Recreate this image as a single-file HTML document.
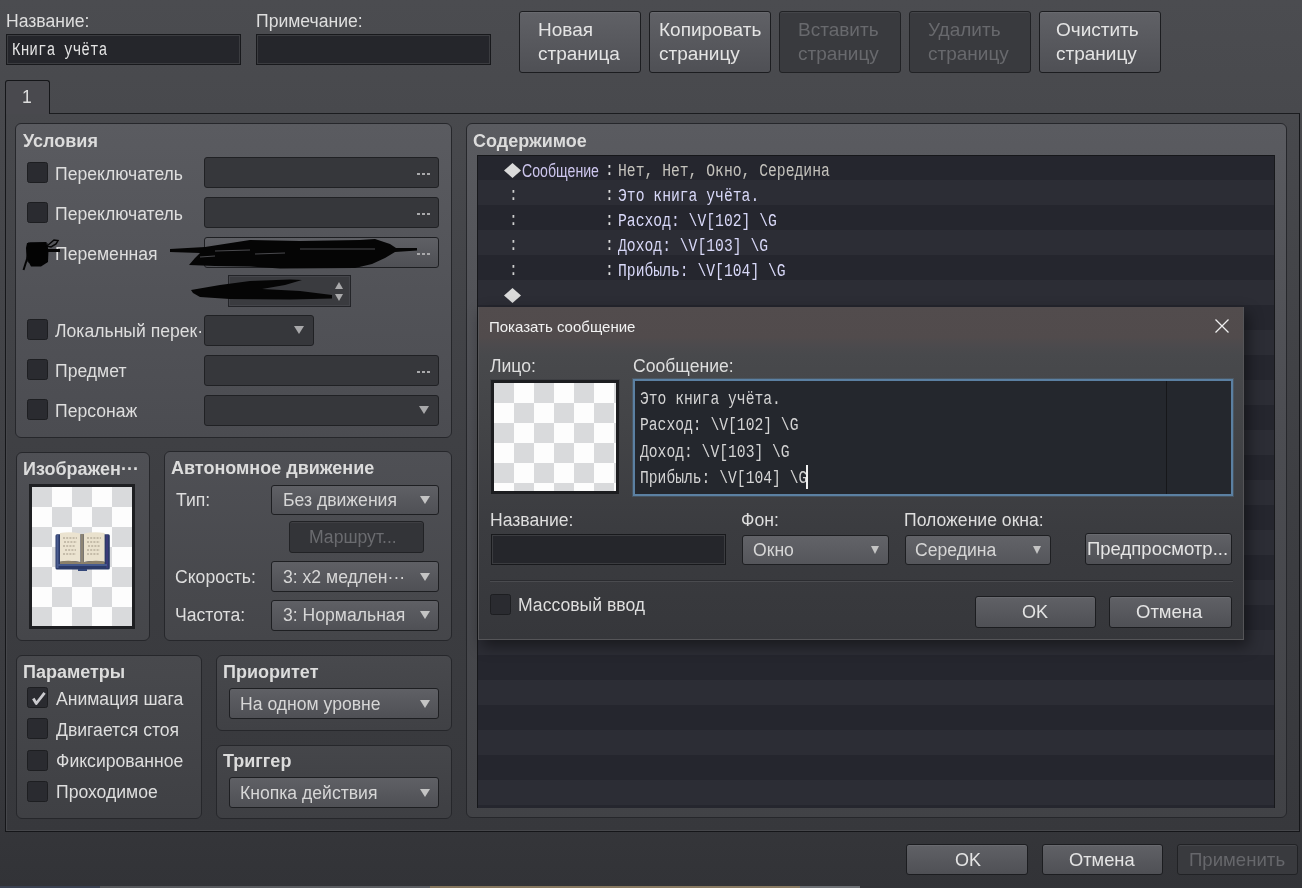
<!DOCTYPE html>
<html><head><meta charset="utf-8">
<style>
*{box-sizing:border-box;margin:0;padding:0}
html,body{width:1302px;height:888px;overflow:hidden}
body{position:relative;-webkit-font-smoothing:antialiased;font-family:"Liberation Sans",sans-serif;font-size:17px;color:#dcdcdc;
background:linear-gradient(to bottom,#4b4c50 0px,#48494d 113px,#3a3b3f 700px,#323337 888px)}
.a{position:absolute}
.t{position:absolute;white-space:nowrap;will-change:transform;line-height:17px;font-size:17.6px;color:#dedede}
.b{font-weight:bold;font-size:18px;line-height:18px;color:#dcdcdc}
.m{font-family:"Liberation Mono",monospace}
.inp{position:absolute;background:#25262b;border:1px solid #18191c;box-shadow:inset 0 0 0 1px #3b3c40}
.btn{position:absolute;border:1px solid #1c1d20;border-radius:3px;background:linear-gradient(#606166,#4f5055);box-shadow:inset 0 1px 0 rgba(255,255,255,0.06)}
.dis{background:#393a3e;border-color:#212225}
.grp{position:absolute;border:1px solid #26272b;border-radius:6px}
.cb{position:absolute;width:21px;height:21px;background:#2a2b30;border:1px solid #1d1e21;border-radius:2.5px}
.fld{position:absolute;background:#36373b;border:1px solid #202124;border-radius:3px}
.cmb{position:absolute;border:1px solid #1e1f22;border-radius:3px;background:linear-gradient(#5f6065,#4f5055)}
.arr{position:absolute;width:0;height:0;border-left:5px solid transparent;border-right:5px solid transparent;border-top:8px solid #c4c4c4}
.dots{position:absolute;width:13px;height:2px;background:linear-gradient(to right,#a9a9ab 0 3px,transparent 3px 5px,#a9a9ab 5px 8px,transparent 8px 10px,#a9a9ab 10px 13px)}
.sx{display:inline-block;transform-origin:0 0}
</style></head><body>

<!-- top labels and inputs -->
<div class="t" style="left:6px;top:13px">Название:</div>
<div class="inp" style="left:6px;top:34px;width:235px;height:31px"></div>
<div class="t m" style="left:12px;top:41px;font-size:19px;line-height:19px;color:#e4e4e4"><span class="sx" style="transform:scaleX(0.76)">Книга учёта</span></div>
<div class="t" style="left:256px;top:13px">Примечание:</div>
<div class="inp" style="left:256px;top:34px;width:235px;height:31px"></div>

<!-- top buttons -->
<div class="btn" style="left:519px;top:11px;width:122px;height:62px"></div>
<div class="btn" style="left:649px;top:11px;width:122px;height:62px"></div>
<div class="btn dis" style="left:779px;top:11px;width:122px;height:62px"></div>
<div class="btn dis" style="left:909px;top:11px;width:122px;height:62px"></div>
<div class="btn" style="left:1039px;top:11px;width:122px;height:62px"></div>

<!-- tab + page panel -->
<div class="a" style="left:5px;top:113px;width:1295px;height:719px;border:1px solid #151619;border-top-color:#1b1c1f;background:linear-gradient(to bottom,#48494d 0,#3d3e42 400px,#37383c 719px);box-shadow:inset 1px -1px 0 #46474b"></div>
<div class="a" style="left:5px;top:80px;width:45px;height:34px;border:1px solid #151619;border-bottom:none;border-radius:3px 3px 0 0;background:#49494e"></div>
<div class="t" style="left:22px;top:88.5px">1</div>


<!-- top button labels -->
<div class="t" style="left:537.5px;top:17.5px;line-height:24.3px;font-size:19px;color:#e4e4e4">Новая<br>страница</div>
<div class="t" style="left:658.5px;top:17.5px;line-height:24.3px;font-size:19px;color:#e4e4e4">Копировать<br>страницу</div>
<div class="t" style="left:797.5px;top:17.5px;line-height:24.3px;font-size:19px;color:#68696d">Вставить<br>страницу</div>
<div class="t" style="left:928px;top:17.5px;line-height:24.3px;font-size:19px;color:#68696d">Удалить<br>страницу</div>
<div class="t" style="left:1056px;top:17.5px;line-height:24.3px;font-size:19px;color:#e4e4e4">Очистить<br>страницу</div>

<!-- group: Условия -->
<div class="grp" style="left:15px;top:123px;width:437px;height:315px;background:linear-gradient(#5a5b60,#4b4c51)"></div>
<div class="t b" style="left:23px;top:132px">Условия</div>
<div class="cb" style="left:27px;top:162px"></div>
<div class="t" style="left:55px;top:166px">Переключатель</div>
<div class="fld" style="left:204px;top:157px;width:235px;height:31px"></div><div class="dots" style="left:417px;top:173px"></div>
<div class="cb" style="left:27px;top:202px"></div>
<div class="t" style="left:55px;top:206px">Переключатель</div>
<div class="fld" style="left:204px;top:197px;width:235px;height:31px"></div><div class="dots" style="left:417px;top:213px"></div>
<div class="cb" style="left:27px;top:242px"></div>
<div class="t" style="left:55px;top:246px">Переменная</div>
<div class="cmb" style="left:204px;top:237px;width:235px;height:31px"></div><div class="dots" style="left:417px;top:253px"></div>
<div class="a" style="left:228px;top:275px;width:123px;height:32px;background:#3a3b3f;border:1px solid #232428;box-shadow:inset 0 0 0 1px #44454a"></div><div class="a" style="left:335px;top:282px;width:0;height:0;border-left:4px solid transparent;border-right:4px solid transparent;border-bottom:7px solid #a9a9ab"></div><div class="a" style="left:335px;top:294px;width:0;height:0;border-left:4px solid transparent;border-right:4px solid transparent;border-top:7px solid #a9a9ab"></div>
<div class="cb" style="left:27px;top:319px"></div>
<div class="t" style="left:55px;top:323px">Локальный перек·</div>
<div class="fld" style="left:204px;top:315px;width:110px;height:31px"></div><div class="arr" style="left:294px;top:326px;border-top-color:#a8a8aa"></div>
<div class="cb" style="left:27px;top:359px"></div>
<div class="t" style="left:55px;top:363px">Предмет</div>
<div class="fld" style="left:204px;top:355px;width:235px;height:31px"></div><div class="dots" style="left:417px;top:371px"></div>
<div class="cb" style="left:27px;top:399px"></div>
<div class="t" style="left:55px;top:403px">Персонаж</div>
<div class="fld" style="left:204px;top:395px;width:235px;height:31px"></div><div class="arr" style="left:419px;top:406px;border-top-color:#a8a8aa"></div>


<!-- scribbles -->
<svg class="a" style="left:0;top:0" width="460" height="320">
<path d="M170 249 L205 247 L250 240 L300 241 L360 240 L375 239 L390 244 L396 248 L417 248 L417 250.5 L395 252 L385 258 L372 264 L355 268 L280 268.5 L250 266.5 L215 266 L189 265 L195 258 L200 253 L170 252 Z" fill="#050505"/>
<path d="M215 251 L250 250 M255 254 L285 253 M300 249 L375 249 M200 257 L215 256" stroke="#5a5b5f" stroke-width="0.8"/>
<path d="M191 290 L220 285 L250 281 L290 279.5 L302 280 L285 285 L262 289 L300 291 L332 295 L332 298.5 L290 299.5 L230 299 L200 297 L193 293 Z" fill="#050505"/>
<path d="M27 243 L46 242 L48.5 250 L48 262 L41 266.5 L31 266.5 L26.5 258 L26 248 Z" fill="#030303"/>
<path d="M28 256 L23.5 270" stroke="#050505" stroke-width="2"/>
<path d="M48 250.5 L60 250.5" stroke="#050505" stroke-width="3"/>
<path d="M47 246 L54 240 L58 240.5 L56 244 L51 247 Z" fill="none" stroke="#050505" stroke-width="1.5"/>
</svg>

<!-- group: Изображение -->
<div class="grp" style="left:16px;top:452px;width:134px;height:189px;background:linear-gradient(#4f5055,#45464a)"></div>
<div class="t b" style="left:23px;top:460px">Изображен···</div>
<div class="a" style="left:29px;top:484px;width:106px;height:145px;background:#1e1f22;padding:3px"><div style="width:100%;height:100%;background:conic-gradient(#fdfdfd 90deg,#d9dadc 90deg 180deg,#fdfdfd 180deg 270deg,#d9dadc 270deg);background-size:40px 40px"></div></div>


<svg class="a" style="left:55px;top:532px" width="56" height="40" viewBox="0 0 56 40">
<rect x="0.5" y="2.3" width="54.3" height="35.2" rx="1.5" fill="#2b3a68"/>
<rect x="1.5" y="3" width="2" height="33" fill="#4a5c90"/>
<rect x="51" y="3" width="2" height="33" fill="#3a3a78"/>
<rect x="3" y="32" width="49" height="2" fill="#465a8e"/>
<rect x="23" y="37" width="9" height="2" fill="#33477a"/>
<path d="M5 1 Q15 -0.5 25.5 1.5 L25.5 30 Q15 28 5 30 Z" fill="#ebe3d0"/>
<path d="M29 1.5 Q39 -0.5 49.6 1 L49.6 30 Q39 28 29 30 Z" fill="#e9e1cd"/>
<rect x="25.5" y="2" width="3.3" height="29" fill="#8c8474"/>
<path d="M5 29.5 Q15 27.5 27 30.5 Q39 27.5 49.6 29.5 L49.6 32 L5 32 Z" fill="#8b806a"/>
<path d="M8 6h14M9 10h13M8 14h12M10 18h11M8 22h13M32 6h14M32 10h13M33 14h12M32 18h13M32 22h12" stroke="#a09684" stroke-width="1.1" stroke-dasharray="2 1.2"/>
</svg>

<!-- group: Автономное движение -->
<div class="grp" style="left:164px;top:451px;width:288px;height:190px;background:linear-gradient(#4f5055,#45464a)"></div>
<div class="t b" style="left:171px;top:459px">Автономное движение</div>
<div class="t" style="left:176px;top:492px">Тип:</div>
<div class="cmb" style="left:271px;top:485px;width:168px;height:30px"></div><div class="t" style="left:283px;top:492px;color:#d6d6d6;font-size:17.6px">Без движения</div><div class="arr" style="left:420px;top:496px"></div>
<div class="btn dis" style="left:289px;top:521px;width:135px;height:32px;background:#333438"></div><div class="t" style="left:309px;top:529px;color:#6a6b6f">Маршрут...</div>
<div class="t" style="left:175px;top:569px">Скорость:</div>
<div class="cmb" style="left:271px;top:561px;width:168px;height:31px"></div><div class="t" style="left:283px;top:569px;color:#d6d6d6;font-size:17.6px">3: x2 медлен···</div><div class="arr" style="left:420px;top:573px"></div>
<div class="t" style="left:175px;top:607px">Частота:</div>
<div class="cmb" style="left:271px;top:600px;width:168px;height:31px"></div><div class="t" style="left:283px;top:607px;color:#d6d6d6;font-size:17.6px">3: Нормальная</div><div class="arr" style="left:420px;top:611px"></div>

<!-- group: Параметры -->
<div class="grp" style="left:16px;top:655px;width:186px;height:164px;background:linear-gradient(#48494d,#3f4044)"></div>
<div class="t b" style="left:23px;top:663px">Параметры</div>
<div class="cb" style="left:27px;top:687px;width:21px;height:21px"></div>
<svg class="a" style="left:27px;top:687px" width="22" height="22"><path d="M6.3 11.5 L9.3 16.5 L17.6 5.8" fill="none" stroke="#cacace" stroke-width="2.8" stroke-linejoin="round"/></svg><div class="t" style="left:56px;top:691px">Анимация шага</div>
<div class="cb" style="left:27px;top:718px;width:21px;height:21px"></div>
<div class="t" style="left:56px;top:722px">Двигается стоя</div>
<div class="cb" style="left:27px;top:750px;width:21px;height:21px"></div>
<div class="t" style="left:56px;top:753px">Фиксированное</div>
<div class="cb" style="left:27px;top:781px;width:21px;height:21px"></div>
<div class="t" style="left:56px;top:784px">Проходимое</div>

<!-- group: Приоритет -->
<div class="grp" style="left:216px;top:655px;width:236px;height:76px;background:linear-gradient(#48494d,#404145)"></div>
<div class="t b" style="left:223px;top:663px">Приоритет</div>
<div class="cmb" style="left:229px;top:688px;width:210px;height:31px"></div><div class="t" style="left:240px;top:696px;color:#d6d6d6;font-size:17.6px">На одном уровне</div><div class="arr" style="left:420px;top:700px"></div>

<!-- group: Триггер -->
<div class="grp" style="left:216px;top:745px;width:236px;height:74px;background:linear-gradient(#45464a,#3e3f43)"></div>
<div class="t b" style="left:223px;top:752px">Триггер</div>
<div class="cmb" style="left:229px;top:777px;width:210px;height:31px"></div><div class="t" style="left:240px;top:785px;color:#d6d6d6;font-size:17.6px">Кнопка действия</div><div class="arr" style="left:420px;top:789px"></div>

<!-- group: Содержимое -->
<div class="grp" style="left:466px;top:123px;width:821px;height:695px;background:linear-gradient(#5a5b60 0,#4c4d52 300px,#414246 695px)"></div>
<div class="t b" style="left:473px;top:132px">Содержимое</div>
<div class="a" style="left:477px;top:155px;width:798px;height:653px;box-shadow:inset 1px 1px 0 #16171a;background:repeating-linear-gradient(to bottom,#25262e 0 25px,#2c2d35 25px 50px);border-right:1px solid #18191c"></div>

<!-- bottom buttons -->
<div class="btn" style="left:906px;top:844px;width:122px;height:31px"></div><div class="t" style="left:954.5px;top:851px;font-size:18px;line-height:18px;color:#e4e4e4">OK</div>
<div class="btn" style="left:1042px;top:844px;width:121px;height:31px"></div><div class="t" style="left:1068.5px;top:851px;font-size:18.3px;line-height:18px;color:#e4e4e4">Отмена</div>
<div class="btn dis" style="left:1177px;top:844px;width:121px;height:31px"></div><div class="t" style="left:1188.5px;top:851px;font-size:18.6px;line-height:18px;color:#66676b">Применить</div>


<!-- list content -->
<div class="a" style="left:504px;top:163px;width:17px;height:15px;background:#dadada;clip-path:polygon(50% 0,100% 50%,50% 100%,0 50%)"></div>
<div class="t" style="left:522px;top:162px;font-size:18px;line-height:18px;color:#cdc6ee"><span class="sx" style="transform:scaleX(0.786)">Сообщение</span></div>
<div class="t m" style="left:604.5px;top:158px;font-size:18px;color:#e0e0e0;line-height:25px"><span class="sx" style="transform:scaleX(0.817)">:<br>:<br>:<br>:<br>:</span></div>
<div class="t m" style="left:508.5px;top:183px;font-size:18px;color:#d0d0d0;line-height:25px"><span class="sx" style="transform:scaleX(0.817)">:<br>:<br>:<br>:</span></div>
<div class="t m" style="left:617.5px;top:159px;font-size:18px;line-height:25px;color:#c4c2bc"><span class="sx" style="transform:scaleX(0.817)">Нет, Нет, Окно, Середина</span></div>
<div class="t m" style="left:617.5px;top:184px;font-size:18px;color:#d8d8f8;line-height:25px"><span class="sx" style="transform:scaleX(0.817)">Это книга учёта.<br>Расход: \V[102] \G<br>Доход: \V[103] \G<br>Прибыль: \V[104] \G</span></div>
<div class="a" style="left:504px;top:288px;width:17px;height:15px;background:#dadada;clip-path:polygon(50% 0,100% 50%,50% 100%,0 50%)"></div>

<!-- dialog -->
<div class="a" style="left:478px;top:307px;width:766px;height:333px;background:linear-gradient(to bottom,#524c4d 0,#514b4c 30px,#4c4a4d 38px,#48494c 48px,#434447 120px,#3b3c40 220px,#36373b 333px);border:1px solid #555558;border-top:none;box-shadow:4px 6px 14px rgba(0,0,0,0.45)"></div>
<div class="t" style="left:489px;top:318px;font-size:15px;color:#f2f2f2">Показать сообщение</div>
<svg class="a" style="left:1215px;top:319px" width="14" height="14"><path d="M0.5 0.5L13.5 13.5M13.5 0.5L0.5 13.5" stroke="#f0f0f0" stroke-width="1.3"/></svg>
<div class="t" style="left:490px;top:358px">Лицо:</div>
<div class="t" style="left:633px;top:358px">Сообщение:</div>
<div class="a" style="left:491px;top:380px;width:128px;height:114px;background:#1c1d20;padding:3px;box-shadow:0 0 0 1px #3e3f43"><div style="width:100%;height:100%;background:conic-gradient(#fdfdfd 90deg,#d9dadc 90deg 180deg,#fdfdfd 180deg 270deg,#d9dadc 270deg);background-size:40px 40px"></div></div>
<div class="a" style="left:633px;top:379px;width:600px;height:117px;background:#24272d;border:2px solid #5b80a2;box-shadow:0 0 0 1px rgba(91,128,162,0.3)"></div>
<div class="a" style="left:1166px;top:381px;width:1px;height:113px;background:#16171a"></div>
<div class="t m" style="left:640px;top:385.8px;font-size:19px;color:#d4d4d4;line-height:26.3px"><span class="sx" style="transform:scaleX(0.772)">Это книга учёта.<br>Расход: \V[102] \G<br>Доход: \V[103] \G<br>Прибыль: \V[104] \G</span></div>
<div class="a" style="left:806px;top:465px;width:2px;height:24px;background:#f0f0f0"></div>
<div class="t" style="left:490px;top:512px">Название:</div>
<div class="inp" style="left:491px;top:534px;width:235px;height:31px"></div>
<div class="t" style="left:741px;top:512px">Фон:</div>
<div class="cmb" style="left:742px;top:535px;width:147px;height:30px;background:linear-gradient(#626368,#55565b)"></div><div class="t" style="left:753px;top:542px;color:#d6d6d6;font-size:17.6px">Окно</div><div class="arr" style="left:871px;top:546px;border-left-width:4.5px;border-right-width:4.5px;border-top-width:8px"></div>
<div class="t" style="left:904px;top:512px">Положение окна:</div>
<div class="cmb" style="left:905px;top:535px;width:146px;height:30px;background:linear-gradient(#626368,#55565b)"></div><div class="t" style="left:915px;top:542px;color:#d6d6d6;font-size:17.6px">Середина</div><div class="arr" style="left:1033px;top:546px;border-left-width:4.5px;border-right-width:4.5px;border-top-width:8px"></div>
<div class="btn" style="left:1085px;top:533px;width:147px;height:32px"></div><div class="t" style="left:1087px;top:541px;color:#e4e4e4"><span class="sx" style="transform:scaleX(1.053)">Предпросмотр...</span></div>
<div class="a" style="left:490px;top:580px;width:743px;height:1px;background:#2b2c30;box-shadow:0 1px 0 #4a4b4f"></div>
<div class="cb" style="left:490px;top:594px"></div>
<div class="t" style="left:518px;top:597px">Массовый ввод</div>
<div class="btn" style="left:975px;top:596px;width:121px;height:32px"></div><div class="t" style="left:1022px;top:603px;font-size:18px;line-height:18px;color:#e4e4e4">OK</div>
<div class="btn" style="left:1109px;top:596px;width:123px;height:32px"></div><div class="t" style="left:1136px;top:603px;font-size:18.5px;line-height:18px;color:#e4e4e4">Отмена</div>

<div class="a" style="left:0;top:886px;width:1302px;height:2px;background:linear-gradient(to right,#3b4252 0,#3b4252 100px,#55575b 100px,#5c5e62 430px,#85765d 430px,#8a7b62 800px,#6d7074 800px,#6d7074 860px,#333438 860px)"></div>
</body></html>
